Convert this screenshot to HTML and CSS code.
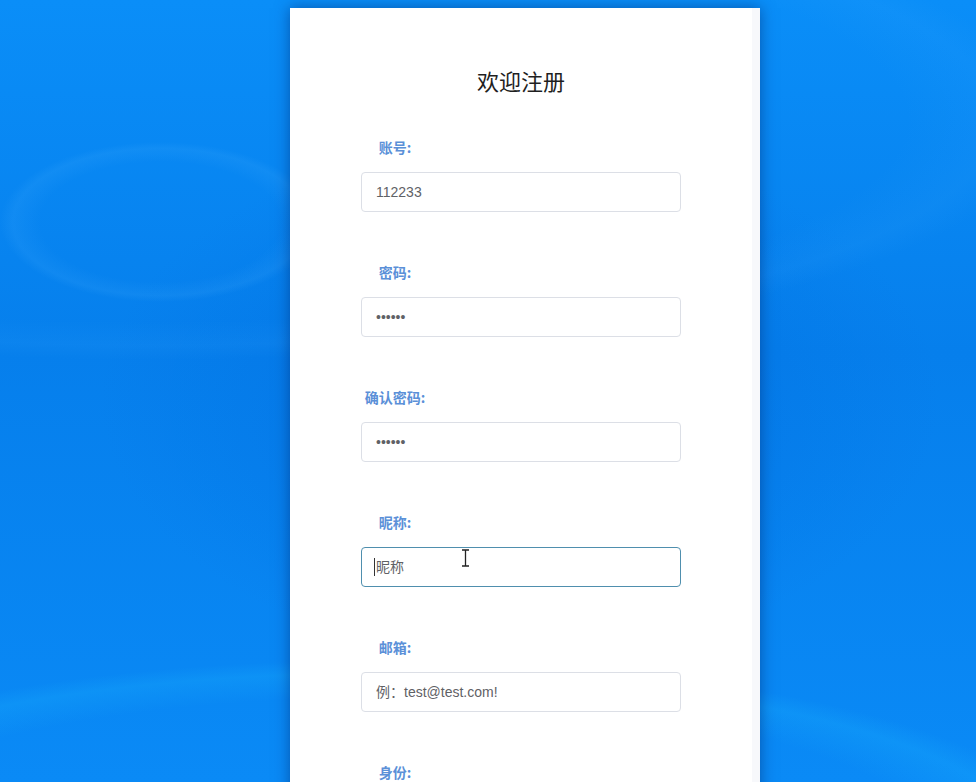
FILE: index.html
```html
<!DOCTYPE html>
<html lang="zh-CN">
<head>
    <meta charset="UTF-8">
    <meta name="viewport" content="width=device-width, initial-scale=1.0">
    <title>欢迎注册</title>
    <link rel="stylesheet" href="styles.css">
</head>
<body>
    <div class="register-card">
        <div class="card-inner">
            <h2 class="title">欢迎注册</h2>
            <form class="register-form">
                <div class="form-item">
                    <label class="form-label">账号:</label>
                    <input class="form-input" type="text" value="112233">
                </div>
                <div class="form-item">
                    <label class="form-label">密码:</label>
                    <input class="form-input" type="password" value="123456">
                </div>
                <div class="form-item">
                    <label class="form-label">确认密码:</label>
                    <input class="form-input" type="password" value="123456">
                </div>
                <div class="form-item">
                    <label class="form-label">昵称:</label>
                    <div class="input-wrap">
                        <input class="form-input is-focus" type="text" placeholder="昵称">
                        <span class="caret"></span>
                        <svg class="ibeam" width="9" height="18" viewBox="0 0 9 18">
                            <path d="M1 1h7M4.5 1v16M1 17h7" stroke="#222" stroke-width="1.3" fill="none"/>
                        </svg>
                    </div>
                </div>
                <div class="form-item">
                    <label class="form-label">邮箱:</label>
                    <input class="form-input" type="text" placeholder="例：test@test.com!">
                </div>
                <div class="form-item">
                    <label class="form-label">身份:</label>
                    <input class="form-input" type="text">
                </div>
            </form>
        </div>
        <div class="scroll-track"></div>
    </div>
</body>
</html>
```

FILE: styles.css
```css
/* Page */
body {
    margin: 0;
    padding: 0;
    height: 782px;
    overflow: hidden;
    font-family: "Liberation Sans", "Noto Sans CJK SC", sans-serif;
    background-color: #0883f0;
    background-image:
        radial-gradient(ellipse 160px 80px at 160px 222px, rgba(0, 100, 220, 0) 75%, rgba(80, 180, 255, 0.13) 92%, rgba(0, 100, 220, 0) 100%),
        radial-gradient(ellipse 700px 190px at 380px 850px, rgba(0, 120, 230, 0) 80%, rgba(30, 190, 255, 0.2) 93%, rgba(0, 120, 230, 0) 100%),
        radial-gradient(ellipse 900px 240px at 150px 120px, rgba(0, 110, 225, 0) 84%, rgba(60, 170, 255, 0.1) 94%, rgba(0, 110, 225, 0) 100%),
        radial-gradient(ellipse 420px 260px at 520px 400px, rgba(0, 105, 220, 0.5), rgba(0, 105, 220, 0) 100%),
        linear-gradient(180deg, #0a8ef8 0%, #067fec 45%, #0a8af6 100%);
}

/* Card */
.register-card {
    display: flex;
    width: 470px;
    height: 900px;
    margin: 8px 0 0 290px;
    background: #fff;
    box-shadow: 0 0 14px rgba(0, 40, 110, 0.55);
}

.card-inner {
    flex: 1;
    padding-top: 57px;
}

.scroll-track {
    width: 8px;
    background: #f7f8fb;
}

.title {
    margin: 0 0 42px;
    height: 30px;
    line-height: 30px;
    text-align: center;
    font-size: 22px;
    font-weight: normal;
    color: #1f1f1f;
    font-family: "Noto Sans CJK SC", sans-serif;
}

/* Form */
.register-form {
    margin: 0;
}

.form-item {
    display: flex;
    flex-direction: column;
    align-items: flex-start;
    margin: 0 0 50px 71px;
}

.form-label {
    display: flex;
    justify-content: center;
    width: 60px;
    margin-left: 4px;
    margin-bottom: 15px;
    height: 20px;
    line-height: 20px;
    white-space: nowrap;
    font-size: 14px;
    font-weight: bold;
    color: #5b90d8;
    font-family: "Noto Sans CJK SC", sans-serif;
}

.input-wrap {
    position: relative;
}

.form-input {
    box-sizing: border-box;
    width: 320px;
    height: 40px;
    padding: 0 14px;
    border: 1px solid #dcdfe6;
    border-radius: 4px;
    outline: none;
    font-size: 14px;
    color: #606266;
    font-family: "Liberation Sans", "Noto Sans CJK SC", sans-serif;
    background: #fff;
}

.form-input::placeholder {
    color: #5f6165;
}

.form-input.is-focus {
    border-color: #4f8fae;
}

.caret {
    position: absolute;
    left: 13px;
    top: 11px;
    width: 1px;
    height: 18px;
    background: #333;
}

.ibeam {
    position: absolute;
    left: 100px;
    top: 2px;
}
```
